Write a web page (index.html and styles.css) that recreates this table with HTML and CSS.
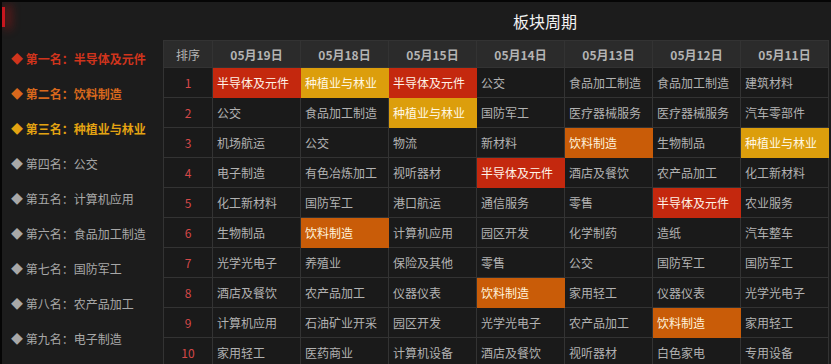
FILE: index.html
```html
<!DOCTYPE html>
<html lang="zh">
<head>
<meta charset="utf-8">
<title>板块周期</title>
<link rel="stylesheet" href="styles.css">
</head>
<body>
<div class="page">
  <aside class="side">
    <div class="mark"></div>
    <ul class="rank-list">
      <li class="r1">◆ 第一名：半导体及元件</li>
      <li class="r2">◆ 第二名：饮料制造</li>
      <li class="r3">◆ 第三名：种植业与林业</li>
      <li>◆ 第四名：公交</li>
      <li>◆ 第五名：计算机应用</li>
      <li>◆ 第六名：食品加工制造</li>
      <li>◆ 第七名：国防军工</li>
      <li>◆ 第八名：农产品加工</li>
      <li>◆ 第九名：电子制造</li>
    </ul>
  </aside>
  <main class="main">
    <h1 class="title">板块周期</h1>
    <table class="grid">
      <colgroup><col class="c-rank"><col class="c-day"><col class="c-day"><col class="c-day"><col class="c-day"><col class="c-day"><col class="c-day"><col class="c-day"></colgroup>
      <thead>
        <tr><th>排序</th><th>05月19日</th><th>05月18日</th><th>05月15日</th><th>05月14日</th><th>05月13日</th><th>05月12日</th><th>05月11日</th></tr>
      </thead>
      <tbody>
        <tr><td class="n">1</td><td class="hl-red">半导体及元件</td><td class="hl-gold">种植业与林业</td><td class="hl-red">半导体及元件</td><td>公交</td><td>食品加工制造</td><td>食品加工制造</td><td>建筑材料</td></tr>
        <tr><td class="n">2</td><td>公交</td><td>食品加工制造</td><td class="hl-gold">种植业与林业</td><td>国防军工</td><td>医疗器械服务</td><td>医疗器械服务</td><td>汽车零部件</td></tr>
        <tr><td class="n">3</td><td>机场航运</td><td>公交</td><td>物流</td><td>新材料</td><td class="hl-orange">饮料制造</td><td>生物制品</td><td class="hl-gold">种植业与林业</td></tr>
        <tr><td class="n">4</td><td>电子制造</td><td>有色冶炼加工</td><td>视听器材</td><td class="hl-red">半导体及元件</td><td>酒店及餐饮</td><td>农产品加工</td><td>化工新材料</td></tr>
        <tr><td class="n">5</td><td>化工新材料</td><td>国防军工</td><td>港口航运</td><td>通信服务</td><td>零售</td><td class="hl-red">半导体及元件</td><td>农业服务</td></tr>
        <tr><td class="n">6</td><td>生物制品</td><td class="hl-orange">饮料制造</td><td>计算机应用</td><td>园区开发</td><td>化学制药</td><td>造纸</td><td>汽车整车</td></tr>
        <tr><td class="n">7</td><td>光学光电子</td><td>养殖业</td><td>保险及其他</td><td>零售</td><td>公交</td><td>国防军工</td><td>国防军工</td></tr>
        <tr><td class="n">8</td><td>酒店及餐饮</td><td>农产品加工</td><td>仪器仪表</td><td class="hl-orange">饮料制造</td><td>家用轻工</td><td>仪器仪表</td><td>光学光电子</td></tr>
        <tr><td class="n">9</td><td>计算机应用</td><td>石油矿业开采</td><td>园区开发</td><td>光学光电子</td><td>农产品加工</td><td class="hl-orange">饮料制造</td><td>家用轻工</td></tr>
        <tr><td class="n">10</td><td>家用轻工</td><td>医药商业</td><td>计算机设备</td><td>酒店及餐饮</td><td>视听器材</td><td>白色家电</td><td>专用设备</td></tr>
      </tbody>
    </table>
  </main>
</div>
</body>
</html>
```
FILE: styles.css
```css
html, body {
  margin: 0;
  padding: 0;
  background: #1c1c1c;
}
body {
  font-family: "Noto Sans CJK SC", "Noto Sans", sans-serif;
  font-size: 12px;
  color: #b0b0b0;
  border-top: 2px solid #050505;
  border-left: 2px solid #050505;
  height: 362px;
  overflow: hidden;
}
.page {
  display: flex;
  align-items: flex-start;
}
.side {
  width: 161px;
  flex: none;
}
.mark {
  width: 3px;
  height: 20px;
  margin-top: 5px;
  background: #c8161e;
  box-shadow: 4px 0 10px 2px rgba(190, 20, 20, 0.45);
}
.rank-list {
  list-style: none;
  margin: 14px 0 0;
  padding: 0 0 0 9px;
}
.rank-list li {
  height: 35px;
  line-height: 35px;
  white-space: nowrap;
  color: #a8a8a8;
}
.rank-list li.r1 { color: #d0341c; font-weight: bold; }
.rank-list li.r2 { color: #d8681c; font-weight: bold; }
.rank-list li.r3 { color: #e3a312; font-weight: bold; }

.main {
  flex: 1;
  display: flex;
  flex-direction: column;
}
.title {
  margin: 0;
  height: 38px;
  line-height: 38px;
  font-size: 16px;
  font-weight: normal;
  color: #f2f2f2;
  padding-left: 350px;
}
.grid {
  border-collapse: collapse;
  table-layout: fixed;
  width: 666px;
}
.c-rank { width: 49px; }
.c-day { width: 88px; }
.grid th, .grid td {
  border: 1px solid #333;
  white-space: nowrap;
  overflow: hidden;
}
.grid thead th {
  background: #2b2b2b;
  height: 26px;
  padding: 0;
  font-weight: bold;
  color: #b4b4b4;
  text-align: center;
}
.grid thead th:first-child { font-weight: normal; }
.grid td {
  height: 29px;
  padding: 0 0 0 4px;
  color: #b2b2b2;
  background: #1a1a1a;
}
.grid td.n {
  text-align: center;
  padding: 0;
  color: #d44848;
}
.grid td.hl-red { background: #c4280e; color: #fff3e8; border-color: #c4280e; }
.grid td.hl-gold { background: #dc9e0c; color: #fff8e4; border-color: #dc9e0c; }
.grid td.hl-orange { background: #c95c08; color: #fff3dc; border-color: #c95c08; }
```
